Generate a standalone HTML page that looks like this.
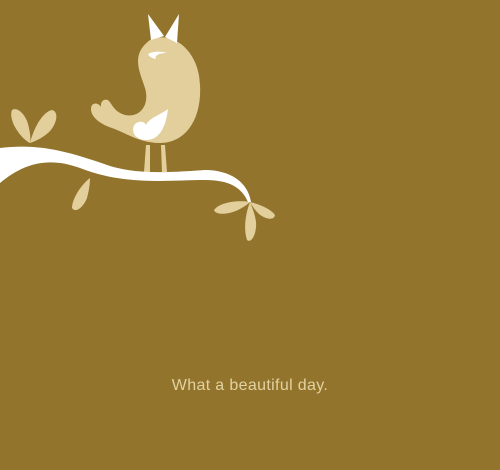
<!DOCTYPE html>
<html><head><style>
html,body{margin:0;padding:0;}
body{width:500px;height:470px;background:#92742d;position:relative;overflow:hidden;}
.t{position:absolute;left:0;width:500px;top:377px;text-align:center;font-family:"Liberation Sans",sans-serif;font-size:16px;color:#e3d2a1;letter-spacing:0.35px;}
svg{position:absolute;left:0;top:0;}
</style></head><body>
<svg width="500" height="470" viewBox="0 0 500 470">
<g fill="#e2cf9c">
<path d="M30,143 C20,138 8,120 12,110 C18,106 26,116 28,124 C30,132 31,138 30,143 Z"/>
<path d="M30,143 C33,130 42,112 52,110 C60,112 56,126 48,133 C42,138 36,141 30,143 Z"/>
<path d="M90,178 C82,184 72,198 72,208 C76,214 84,206 87,198 C89,190 90,184 90,178 Z"/>
<path d="M250,202 C238,200 220,202 214,210 C216,216 230,214 238,210 C244,207 248,204 250,202 Z"/>
<path d="M250,202 C246,212 243,228 247,240 C252,244 257,232 256,222 C255,214 252,207 250,202 Z"/>
<path d="M250,202 C258,204 270,208 275,215 C274,221 265,219 259,214 C255,210 252,206 250,202 Z"/>
<path d="M146,145 L150,145 L150,172 L144,172 Z"/>
<path d="M161,145 L165,145 L167,172 L162,172 Z"/>
<path d="M150,40 C172,30 199,50 200,85 C202,120 185,143 160,143 C140,143 128,134 112,128 C100,124 91,117 91,109 C91,102 98,102 101,107 C100,100 106,98 109,101 C113,106 115,112 125,115 C140,118 150,105 145,88 C140,72 130,55 150,40 Z"/>
</g>
<g fill="#fff">
<path d="M148,14 L164,36 L151,40 Z"/>
<path d="M179,14 L177,43 L165,37 Z"/>
<path d="M168,109 C166,126 160,140 146,140 C135,140 130,131 135,124 C140,120 145,122 146,125 C149,118 160,115 168,109 Z"/>
<path d="M148,54 C153,51 161,51 167,53 C160,53 154,55 156,59 C151,58 149,56 148,54 Z"/>
<path d="M0,148 C40,143 70,152 110,166 C140,175 175,172 205,170 C230,170 248,182 251,202 L248,202 C242,188 230,180 205,180 C170,180 125,186 80,168 C50,157 25,162 0,183 Z"/>
</g>
</svg>
<div class="t">What a beautiful day.</div>
</body></html>
